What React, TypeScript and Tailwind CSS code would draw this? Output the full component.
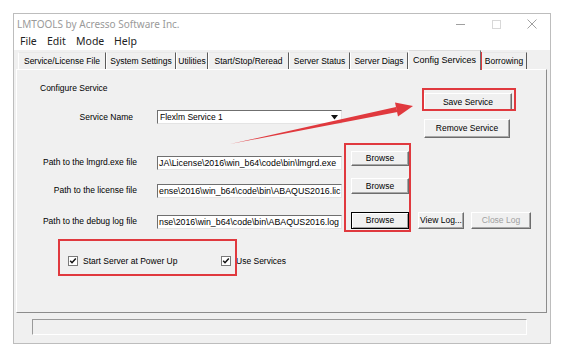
import React from 'react';

const tabs: [string, number][] = [
  ['Service/License File', 88],
  ['System Settings', 70],
  ['Utilities', 32],
  ['Start/Stop/Reread', 81],
  ['Server Status', 61],
  ['Server Diags', 58],
  ['Config Services', 73],
  ['Borrowing', 46],
];

function Btn({
  w,
  h,
  children,
  isDefault,
  disabled,
}: {
  w: string;
  h: string;
  children: React.ReactNode;
  isDefault?: boolean;
  disabled?: boolean;
}) {
  const edge = isDefault
    ? 'border-black shadow-[inset_1px_1px_0_#fff,inset_-1px_-1px_0_#a0a0a0]'
    : 'border-t-white border-l-white border-r-[#6d6d6d] border-b-[#6d6d6d] shadow-[inset_-1px_-1px_0_#a8a8a8]';
  return (
    <div
      className={`${w} ${h} shrink-0 border bg-[#f0f0f0] flex items-center justify-center text-[8.5px] leading-none ${edge} ${
        disabled ? 'text-[#a0a0a0]' : 'text-black'
      }`}
    >
      {children}
    </div>
  );
}

function Field({ text, dropdown }: { text: string; dropdown?: boolean }) {
  return (
    <div className="w-[185px] h-[14px] shrink-0 bg-white border border-t-[#6f6f6f] border-l-[#6f6f6f] border-r-[#e4e4e4] border-b-[#e4e4e4] flex items-center overflow-hidden leading-none text-black">
      {dropdown ? (
        <>
          <span className="pl-[2px] flex-1 whitespace-nowrap text-[8.5px]">{text}</span>
          <svg width="7" height="5" viewBox="0 0 7 5" className="mr-[3px]">
            <path d="M0 0h7L3.5 4.5z" fill="#111" />
          </svg>
        </>
      ) : (
        <span className="pl-[1px] whitespace-nowrap text-[8.8px]">{text}</span>
      )}
    </div>
  );
}

function Check({ label }: { label: string }) {
  return (
    <div className="flex items-center">
      <div className="w-[10px] h-[10px] bg-white border border-[#7a7a7a] flex items-center justify-center">
        <svg width="8" height="8" viewBox="0 0 8 8">
          <path d="M1.2 3.8l1.8 1.9 3.8-4.2" stroke="#111" strokeWidth="1.5" fill="none" />
        </svg>
      </div>
      <span className="ml-[5px] text-[8.5px] leading-none text-black">{label}</span>
    </div>
  );
}

export default function App() {
  return (
    <div className="relative w-[576px] h-[360px] bg-white overflow-hidden font-['Liberation_Sans',Arial,sans-serif]">
      {/* Window */}
      <div className="ml-[13px] mt-[13px] w-[538px] h-[331px] border border-[#bdbdbd] bg-[#f0f0f0] flex flex-col">
        {/* Title bar */}
        <div className="h-[20px] bg-white flex items-center">
          <span className="pl-[3px] flex-1 font-['Noto_Sans',sans-serif] text-[10px] text-[#9a9a9a]">
            LMTOOLS by Acresso Software Inc.
          </span>
          <div className="w-[36px] h-full flex items-center justify-center">
            <div className="w-[9px] h-px bg-[#a0a0a0]" />
          </div>
          <div className="w-[36px] h-full flex items-center justify-center">
            <div className="w-[9px] h-[9px] border border-[#d8d8d8]" />
          </div>
          <div className="w-[36px] h-full flex items-center justify-center">
            <svg width="10" height="10" viewBox="0 0 10 10">
              <path d="M0.5 0.5l9 9M9.5 0.5l-9 9" stroke="#a0a0a0" strokeWidth="1" />
            </svg>
          </div>
        </div>

        {/* Menu bar */}
        <div className="h-[16px] bg-white flex items-center pl-[6px] font-['Noto_Sans',sans-serif] text-[10.5px] text-[#222]">
          <span className="w-[27px]">File</span>
          <span className="w-[29px]">Edit</span>
          <span className="w-[38px]">Mode</span>
          <span>Help</span>
        </div>

        {/* Tabs */}
        <div className="h-[19px] flex items-end pl-[4px]">
          {tabs.map(([name, w]) => {
            const active = name === 'Config Services';
            return (
              <div
                key={name}
                style={{ width: w }}
                className={
                  active
                    ? 'relative z-10 -mb-px h-[20px] bg-[#f0f0f0] border-t border-l border-r border-t-[#dcdcdc] border-l-white border-r-[#6d6d6d] flex items-center justify-center text-[9px] leading-none text-black whitespace-nowrap'
                    : 'h-[17px] border-t border-l border-r border-t-[#e8e8e8] border-l-white border-r-[#5a5a5a] flex items-center justify-center text-[8.5px] leading-none text-black whitespace-nowrap'
                }
              >
                {name}
              </div>
            );
          })}
        </div>

        {/* Tab pane */}
        <div className="ml-[2px] w-[531px] h-[244px] border border-t-white border-l-white border-r-[#8c8c8c] border-b-[#8c8c8c] text-[8.5px] leading-none text-black">
          {/* Top section */}
          <div className="flex">
            <div className="w-[325px]">
              <div className="pl-[23px] mt-[12px] h-[12px] flex items-center">Configure Service</div>
              <div className="mt-[16px] flex items-center">
                <div className="w-[116px] text-right">Service Name</div>
                <div className="ml-[24px]">
                  <Field text="Flexlm Service 1" dropdown />
                </div>
              </div>
            </div>
            <div className="ml-[82px] pt-[23px]">
              <Btn w="w-[88px]" h="h-[18px]">Save Service</Btn>
              <div className="mt-[8px]">
                <Btn w="w-[86px]" h="h-[19px]">Remove Service</Btn>
              </div>
            </div>
          </div>

          {/* Path rows */}
          <div className="mt-[13px] flex items-start">
            <div className="w-[120px] mt-[7px] text-right">Path to the lmgrd.exe file</div>
            <div className="ml-[20px] mt-[5px]">
              <Field text="JA\License\2016\win_b64\code\bin\lmgrd.exe" />
            </div>
            <div className="ml-[9px]">
              <Btn w="w-[58px]" h="h-[15px]">Browse</Btn>
            </div>
          </div>

          <div className="mt-[8px] flex items-start">
            <div className="w-[120px] mt-[8px] text-right">Path to the license file</div>
            <div className="ml-[20px] mt-[6px]">
              <Field text="ense\2016\win_b64\code\bin\ABAQUS2016.lic" />
            </div>
            <div className="ml-[9px]">
              <Btn w="w-[58px]" h="h-[16px]">Browse</Btn>
            </div>
          </div>

          <div className="mt-[14px] flex items-start">
            <div className="w-[120px] mt-[5px] text-right">Path to the debug log file</div>
            <div className="ml-[20px] mt-[3px]">
              <Field text="nse\2016\win_b64\code\bin\ABAQUS2016.log" />
            </div>
            <div className="ml-[9px]">
              <Btn w="w-[58px]" h="h-[17px]" isDefault>Browse</Btn>
            </div>
            <div className="ml-[9px]">
              <Btn w="w-[46px]" h="h-[17px]">View Log...</Btn>
            </div>
            <div className="ml-[7px]">
              <Btn w="w-[60px]" h="h-[17px]" disabled>Close Log</Btn>
            </div>
          </div>

          {/* Checkboxes */}
          <div className="mt-[26px] h-[12px] flex items-center pl-[51px]">
            <div className="w-[153px]">
              <Check label="Start Server at Power Up" />
            </div>
            <Check label="Use Services" />
          </div>
        </div>

        {/* Status bar */}
        <div className="mt-[6px] ml-[18px] w-[495px] h-[16px] border border-t-[#9a9a9a] border-l-[#9a9a9a] border-r-white border-b-white" />
      </div>

      {/* Annotations */}
      <div className="absolute left-[408px] top-[52px] w-[74px] h-[18px] border-2 border-[#e0393e]" />
      <div className="absolute left-[422px] top-[88px] w-[94px] h-[23px] border-2 border-[#e0393e]" />
      <div className="absolute left-[344px] top-[143px] w-[67px] h-[89px] border-2 border-[#e0393e]" />
      <div className="absolute left-[58px] top-[239px] w-[179px] h-[37px] border-2 border-[#e0393e]" />
      <svg className="absolute left-0 top-0" width="576" height="360" viewBox="0 0 576 360">
        <polygon points="230,144 396,107 397.5,112" fill="#e0393e" />
        <polygon points="413,106 395,102.5 398,116.5" fill="#e0393e" />
      </svg>
    </div>
  );
}
